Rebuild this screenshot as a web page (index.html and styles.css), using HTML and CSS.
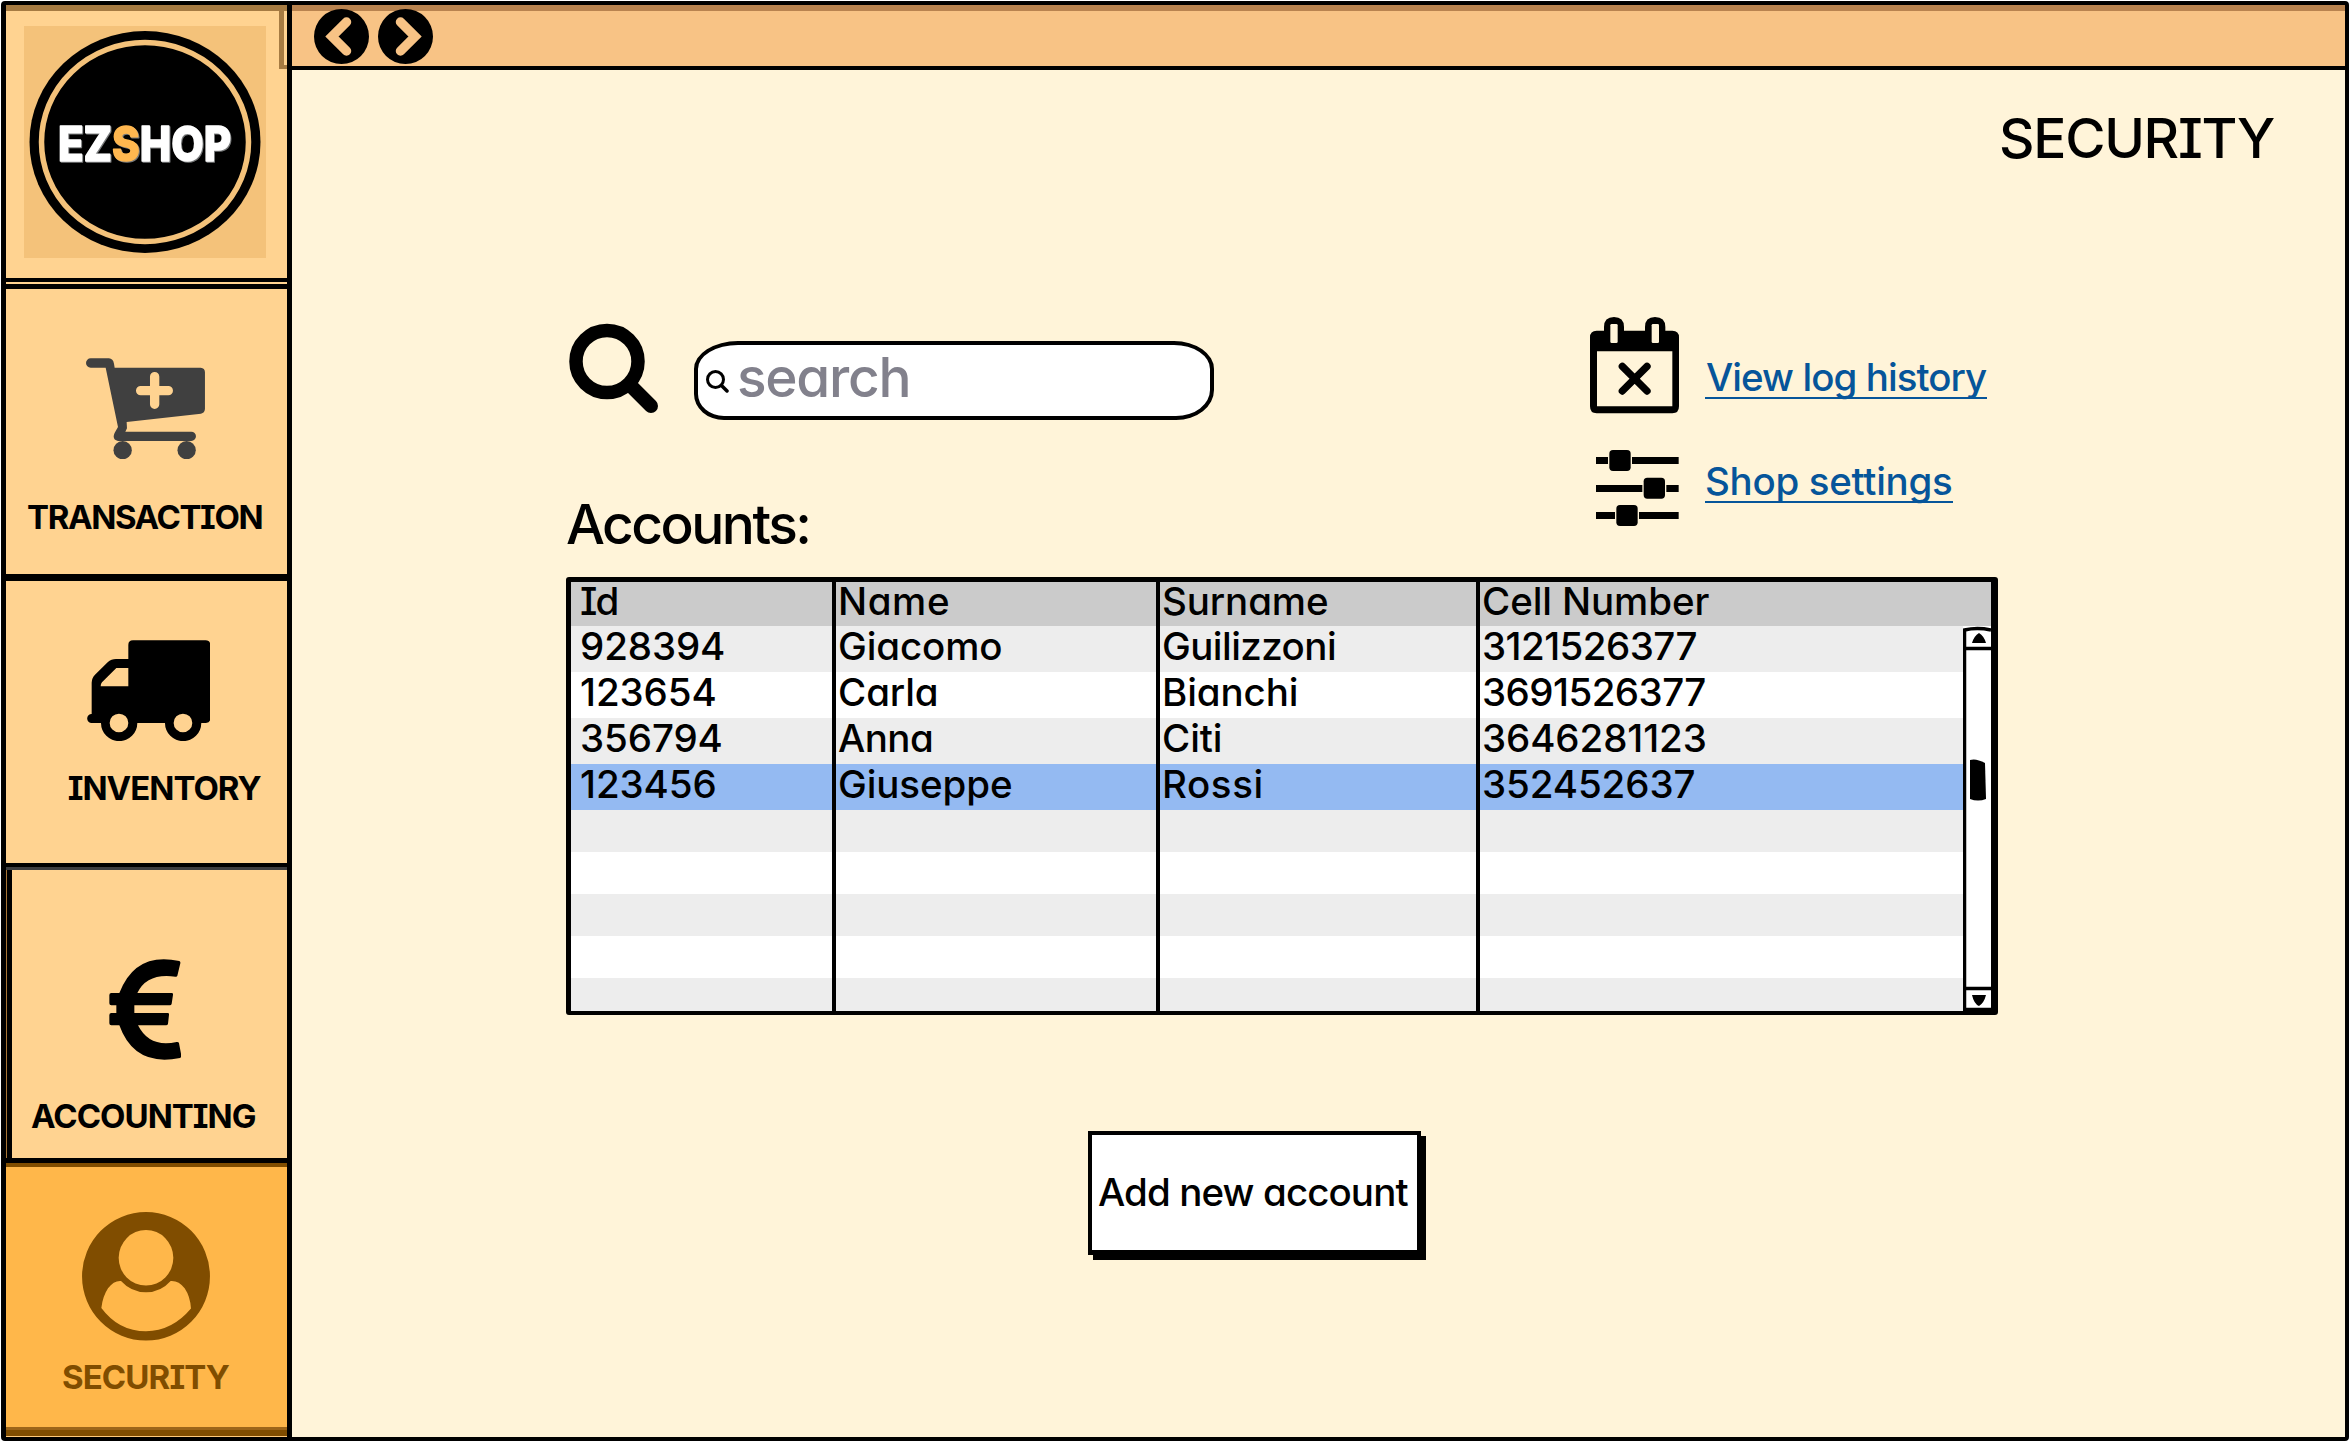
FILE: index.html
```html
<!DOCTYPE html>
<html lang="en">
<head>
<meta charset="utf-8">
<title>EZShop - Security</title>
<link rel="stylesheet" href="styles.css">
</head>
<body>
<div class="app">
  <nav class="sidebar">
    <div class="logo">
      <svg class="logo-art" viewBox="24 26 242 232" width="242" height="232">
        <rect x="24" y="26" width="242" height="232" fill="#f4c27a"/>
        <ellipse cx="145" cy="142" rx="115.5" ry="111"/>
        <ellipse cx="145" cy="142" rx="103.5" ry="99.5" fill="none" stroke="#f4c27a" stroke-width="5.5"/>
        <text class="logo-text" x="58" y="160.500" textLength="173" lengthAdjust="spacingAndGlyphs">EZ<tspan class="logo-accent">S</tspan>HOP</text>
      </svg>
    </div>
    <a class="item transaction">
      <svg viewBox="258 264 358 304" width="119.300" height="101.300" fill="#404040">
        <path fill-rule="evenodd" d="M272 265H327Q339 266 342 281L344 293H602Q615 294 615 307V417Q614 429 603 431L380 456L381 475L376 485H574A14 14 0 0 1 574 513H354Q341 511 341 499Q341 494 345 487L354 471L317 293H272A14 14 0 0 1 272 265ZM450 348H422A14 14 0 0 0 422 376H450V403A14 14 0 0 0 478 403V376H505A14 14 0 0 0 505 348H478V320A14 14 0 0 0 450 320Z"/>
        <circle cx="368" cy="540.500" r="27.500"/><circle cx="560" cy="540.500" r="27.500"/>
      </svg>
      <span class="label">TRANSACTION</span>
    </a>
    <a class="item inventory">
      <svg viewBox="260 210 370 304" width="123.300" height="101.300">
        <path fill-rule="evenodd" d="M398 211H616Q630 211 630 225V446Q630 459 617 459H603A54.500 54.500 0 0 1 494 459H411A54.500 54.500 0 0 1 302 459H274A13.500 13.500 0 0 1 274 432V338Q274 324 284 314L322 277Q333 267 347 267H384V225Q384 211 398 211ZM384 294H348L305 337Q301 341 301 349H384ZM356 431A28 28 0 1 0 356 487A28 28 0 1 0 356 431ZM548 431A28 28 0 1 0 548 487A28 28 0 1 0 548 431Z"/>
      </svg>
      <span class="label">INVENTORY</span>
    </a>
    <a class="item accounting">
      <svg viewBox="326 327 218 303" width="72.700" height="101">
        <path d="M537 333Q541 335 540 340L531 377Q530 381 525 380Q440 368 411 429H514Q519 429 518 434L514 461Q513 466 508 466H402V489H502Q507 489 506 494L503 521Q502 526 497 526H413Q447 594 529 576Q535 575 536 580L543 617Q544 622 539 624Q402 652 357 526H333Q327 526 327 520V495Q327 489 333 489H348V466H333Q327 466 327 460V435Q327 429 333 429H357Q405 304 537 333Z"/>
      </svg>
      <span class="label">ACCOUNTING</span>
    </a>
    <a class="item security">
      <svg viewBox="246 216 384 386" width="128" height="128.600" fill="#804d00">
        <path fill-rule="evenodd" d="M438 216A192 193 0 1 0 438 602A192 193 0 1 0 438 216ZM438 270A82 83.500 0 1 1 438 437A82 83.500 0 1 1 438 270ZM363 423Q394 457 438 457Q482 457 512 423Q536 421 554 445Q571 470 573 506Q516 574 438 574Q356 574 304 504Q308 469 324 445Q342 421 363 423Z"/>
      </svg>
      <span class="label">SECURITY</span>
    </a>
  </nav>
  <div class="page">
    <header class="topbar">
      <svg viewBox="-27.500 -27.500 55 55" width="55" height="55"><circle r="27.500"/><path class="chevron" d="M5 -14.500L-9.500 0L5 14.500"/></svg>
      <svg viewBox="-27.500 -27.500 55 55" width="55" height="55"><circle r="27.500"/><path class="chevron" d="M-5 -14.500L9.500 0L-5 14.500"/></svg>
    </header>
    <main>
      <h1>SECURITY</h1>
      <div class="content">
        <div class="tools">
          <div class="finder">
            <div class="search-row">
              <svg class="glass" viewBox="0 0 90 91" width="90" height="91"><circle cx="38" cy="38.500" r="31" fill="none" stroke="#000" stroke-width="13.500"/><path d="M62 63L82 83" stroke="#000" stroke-width="14" stroke-linecap="round"/></svg>
              <div class="search-box">
                <svg viewBox="0 0 23 23" width="23" height="23"><circle cx="9.500" cy="9.500" r="8" fill="none" stroke="#000" stroke-width="3"/><path d="M15.500 15.500L21 21" stroke="#000" stroke-width="3.500" stroke-linecap="round"/></svg>
                <span>search</span>
              </div>
            </div>
            <h2>Accounts:</h2>
          </div>
          <div class="links">
            <div class="link-row log">
              <svg viewBox="90 50 267 290" width="89" height="96.700">
                <path fill-rule="evenodd" d="M110 91H132V80Q132 50 162 50Q192 50 192 80V91H255V80Q255 50 285 50Q316 50 316 80V91H337Q357 91 357 111V318Q357 339 337 339H110Q90 339 90 318V111Q90 91 110 91ZM111 153V318H337V153Z"/>
                <rect x="151" y="71" width="22" height="57" rx="4" fill="#fff4d9"/><rect x="275" y="71" width="22" height="57" rx="4" fill="#fff4d9"/>
                <path d="M187 198L261 272M261 198L187 272" stroke="#000" stroke-width="22" stroke-linecap="round"/>
              </svg>
              <a>View log history</a>
            </div>
            <div class="link-row settings">
              <svg viewBox="90 450 267 228" width="89" height="76">
                <path d="M108 471H144V492H108ZM216 471H356V492H216ZM108 555H247V576H108ZM319 555H356V576H319ZM108 636H165V657H108ZM237 636H356V657H237Z"/>
                <rect x="148" y="450" width="64" height="63" rx="11"/><rect x="251" y="533" width="64" height="63" rx="11"/><rect x="169" y="615" width="64" height="63" rx="11"/>
              </svg>
              <a>Shop settings</a>
            </div>
          </div>
        </div>
        <div class="table">
          <div class="row head"><span class="id">Id</span><span class="open">Name</span><span>Surname</span><span>Cell Number</span></div>
          <div class="body">
            <div class="rows">
              <div class="row"><span>928394</span><span>Giacomo</span><span class="tight">Guilizzoni</span><span class="tight">3121526377</span></div>
              <div class="row"><span>123654</span><span>Carla</span><span>Bianchi</span><span class="tight">3691526377</span></div>
              <div class="row"><span>356794</span><span class="tight">Anna</span><span>Citi</span><span>3646281123</span></div>
              <div class="row selected"><span>123456</span><span>Giuseppe</span><span class="open">Rossi</span><span>352452637</span></div>
              <div class="row empty"><span></span><span></span><span></span><span></span></div>
              <div class="row empty"><span></span><span></span><span></span><span></span></div>
              <div class="row empty"><span></span><span></span><span></span><span></span></div>
              <div class="row empty"><span></span><span></span><span></span><span></span></div>
              <div class="row empty last"><span></span><span></span><span></span><span></span></div>
            </div>
            <svg class="scrollbar" viewBox="0 0 28 385" width="28" height="385">
              <rect width="28" height="385" fill="#fff"/>
              <path d="M1.500 385V4Q14 1 28 4M1 22.500H28M1 362.500H28M1 383.500H28" fill="none" stroke="#000" stroke-width="3.500"/>
              <path d="M9 17Q11 10 16 7Q21 10 23 17ZM9 369H23Q21 377 16 380Q11 378 9 369Z"/>
              <path d="M7 134Q13 132 22 137L23 173Q15 176 7 173Z"/>
            </svg>
          </div>
        </div>
        <button class="add">Add new account</button>
      </div>
    </main>
  </div>
</div>
</body>
</html>
```
FILE: styles.css
```css
* { box-sizing: border-box; }
body {
  margin: 0;
  background: #fff;
  color: #000;
  font: 450 38.5px/40px Inter, sans-serif;
  font-feature-settings: "cv11", "cv08";
}
svg { display: block; flex: none; }
.app {
  display: grid;
  grid-template-columns: 286px 1fr;
  width: 2348px;
  height: 1440px;
  margin: 1px 0 0 1px;
  border: 4px solid #000;
  border-left-width: 5px;
  border-radius: 4px;
  background: #000;
}
body { display: flow-root; }

.sidebar {
  display: flex;
  flex-direction: column;
  border-right: 5px solid #000;
  background: #ffd391;
}
.logo {
  height: 277px;
  padding: 15px 0 0 18px;
  border-top: 6px solid #a67b42;
  border-bottom: 4px solid #000;
  background:
    linear-gradient(#a67b42, #a67b42) 273px 0 / 5px 58px no-repeat,
    linear-gradient(#a67b42, #a67b42) 273px 54px / 8px 4px no-repeat;
}
.logo-text {
  font: 850 48px Inter, sans-serif;
  fill: #fff;
  stroke: #fff;
  stroke-width: 1.5px;
  stroke-linejoin: round;
  filter: drop-shadow(1.5px 1.5px 0 #77797a);
}
.logo-accent { fill: #ffb74f; stroke: #ffb74f; }
.item {
  display: flex;
  flex: none;
  flex-direction: column;
  align-items: flex-start;
  border-bottom: 7px solid #000;
}
.label {
  font-size: 33px;
  line-height: 33px;
  font-weight: 650;
}
.transaction {
  height: 297px;
  margin-top: 2px;
  padding: 69px 0 0 80px;
  border-top: 5px solid #000;
}
.transaction .label { margin: 42px 0 0 -59px; letter-spacing: -1.4px; }
.inventory {
  height: 286px;
  padding: 59px 0 0 80.7px;
  border-bottom-width: 4px;
}
.inventory .label { margin: 31px 0 0 -19px; letter-spacing: -1px; }
.accounting {
  height: 296px;
  padding: 89px 0 0 102.700px;
  border-top: 3px solid #3d3d3f;
  border-bottom-width: 5px;
  background: linear-gradient(90deg, #a87434 1px, #000 1px) 0 0 / 6px 100% no-repeat;
}
.accounting .label { margin: 40px 0 0 -77.700px; letter-spacing: -1px; }
.security {
  height: 274px;
  padding: 45px 0 0 76px;
  border-top: 4px solid #804d00;
  border-bottom: 0;
  background: linear-gradient(#9d6519 3px, #804d00 3px, #804d00 9px, #ffc97a 9px) 0 100% / 100% 10px no-repeat #ffb74a;
  color: #804d00;
}
.security .label { margin: 20px 0 0 -20px; letter-spacing: -0.9px; }

.page {
  display: flex;
  flex-direction: column;
  background: #fff4d9;
}
.topbar {
  display: flex;
  gap: 9px;
  height: 65px;
  padding-left: 22px;
  border-top: 6px solid #b9834f;
  border-bottom: 4px solid #000;
  background: #f8c385;
}
.topbar svg { margin-top: -2px; }
.chevron {
  fill: none;
  stroke: #f8c385;
  stroke-width: 9.5;
  stroke-linejoin: miter;
  stroke-linecap: round;
}
h1, h2 {
  margin: 0;
  font-size: 55px;
  line-height: 60px;
  font-weight: 470;
}
h1 {
  margin: 38px 71px 0 0;
  text-align: right;
  letter-spacing: -1.3px;
}
.content {
  width: 1432px;
  margin: 147px 0 0 274px;
}
.tools {
  display: flex;
  justify-content: space-between;
  margin-bottom: 23px;
}
.search-row {
  display: flex;
  height: 105px;
  padding-left: 3px;
}
.glass { margin-top: 8px; }
.search-box {
  display: flex;
  align-items: flex-start;
  width: 520px;
  height: 79px;
  margin: 26px 0 0 35px;
  padding: 25px 0 0 8px;
  border: 4px solid #000;
  border-radius: 44px 40px 38px 30px / 28px 28px 30px 26px;
  background: #fff;
}
.search-box span {
  margin: -23px 0 0 8px;
  font-size: 55px;
  line-height: 60px;
  font-weight: 500;
  letter-spacing: -1.3px;
  color: #82818c;
}
h2 {
  margin-top: 74px;
  letter-spacing: -2.5px;
}
.links { width: 408px; }
.link-row {
  display: flex;
  align-items: flex-start;
  gap: 26px;
}
.link-row a {
  border-bottom: 2.5px solid #06559a;
  color: #06559a;
  white-space: nowrap;
}
.log { height: 133px; padding-top: 2px; }
.log a { width: 282px; margin-top: 39.5px; padding-left: 1px; letter-spacing: -0.95px; }
.settings { padding-top: 2px; }
.settings a { width: 248px; margin-top: 11px; letter-spacing: -0.3px; }

.table {
  height: 438px;
  border: 5px solid #000;
  border-width: 5px 7px 4px 5px;
  border-radius: 3px;
  background: #fff;
}
.row {
  display: grid;
  grid-template-columns: 265px 324px 320px 1fr;
  height: 46px;
  line-height: 41px;
  letter-spacing: -0.1px;
}
.row span { padding-left: 2px; border-left: 4px solid #000; margin-left: -4px; }
.row span:first-child { padding-left: 9px; border: 0; margin: 0; }
.row .tight { letter-spacing: -0.55px; }
.row .open { letter-spacing: 0.6px; }
.row .id { letter-spacing: -2px; }
.head { height: 44px; line-height: 38px; background: #cbcbcb; }
.body { display: flex; }
.rows { flex: 1; }
.rows .row:nth-child(odd) { background: #ededed; }
.rows .selected { background: #94baf2; }
.rows .empty { height: 42px; }
.rows .last { height: 33px; }

.add {
  display: block;
  width: 333px;
  height: 124px;
  margin: 116px 0 0 522px;
  padding: 0 0 2px 6px;
  border: 4px solid #000;
  border-bottom-width: 5px;
  background: #fff;
  box-shadow: 5px 5px 0 #000;
  color: #000;
  font: inherit;
  font-feature-settings: inherit;
  letter-spacing: -0.9px;
  text-align: left;
  white-space: nowrap;
}
```
